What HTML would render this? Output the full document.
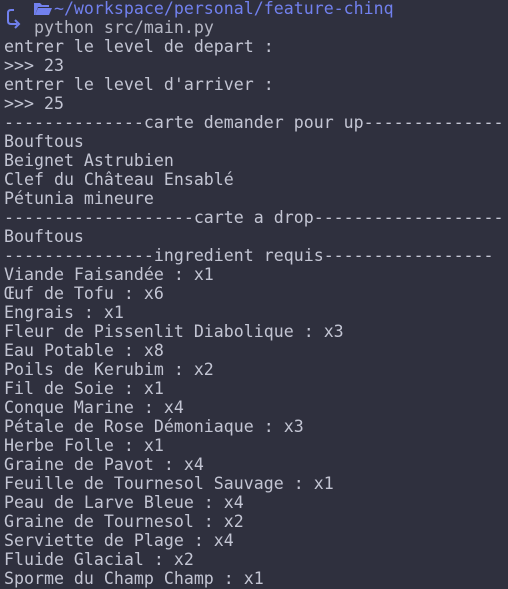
<!DOCTYPE html>
<html><head><meta charset="utf-8"><style>
html,body{margin:0;padding:0;background:#2f303e;width:508px;height:589px;overflow:hidden}
pre{margin:0;position:absolute;left:4px;top:-1px;font-family:"DejaVu Sans Mono","Liberation Mono",monospace;font-size:16.6px;line-height:19px;color:#c3c5d3;white-space:pre}
.b{color:#7180ee}
.g{color:#b5b7c4}
</style></head><body>
<svg style="position:absolute;left:6px;top:8px" width="20" height="24" viewBox="0 0 20 24"><path d="M8 2 H5 Q2 2 2 5 V13 Q2 16 5 16 H11" fill="none" stroke="#7180ee" stroke-width="2"/><path d="M9 12 L13 16 L9 20" fill="none" stroke="#7180ee" stroke-width="2"/></svg>
<pre>     <span class="b">~/workspace/personal/feature-chinq</span>
   <span class="g">python src/main.py</span>
entrer le level de depart :
>>> 23
entrer le level d'arriver :
>>> 25
--------------carte demander pour up--------------
Bouftous
Beignet Astrubien
Clef du Château Ensablé
Pétunia mineure
-------------------carte a drop-------------------
Bouftous
---------------ingredient requis-----------------
Viande Faisandée : x1
Œuf de Tofu : x6
Engrais : x1
Fleur de Pissenlit Diabolique : x3
Eau Potable : x8
Poils de Kerubim : x2
Fil de Soie : x1
Conque Marine : x4
Pétale de Rose Démoniaque : x3
Herbe Folle : x1
Graine de Pavot : x4
Feuille de Tournesol Sauvage : x1
Peau de Larve Bleue : x4
Graine de Tournesol : x2
Serviette de Plage : x4
Fluide Glacial : x2
Sporme du Champ Champ : x1</pre>
<svg style="position:absolute;left:34px;top:2px" width="18" height="14" viewBox="0 0 18 14"><path d="M0 1 H6 L8 3 H15 V5 H4 L1 13 H0 Z" fill="#7180ee"/><path d="M4 6 H18 L15 13 H1 Z" fill="#7180ee"/></svg>
</body></html>
